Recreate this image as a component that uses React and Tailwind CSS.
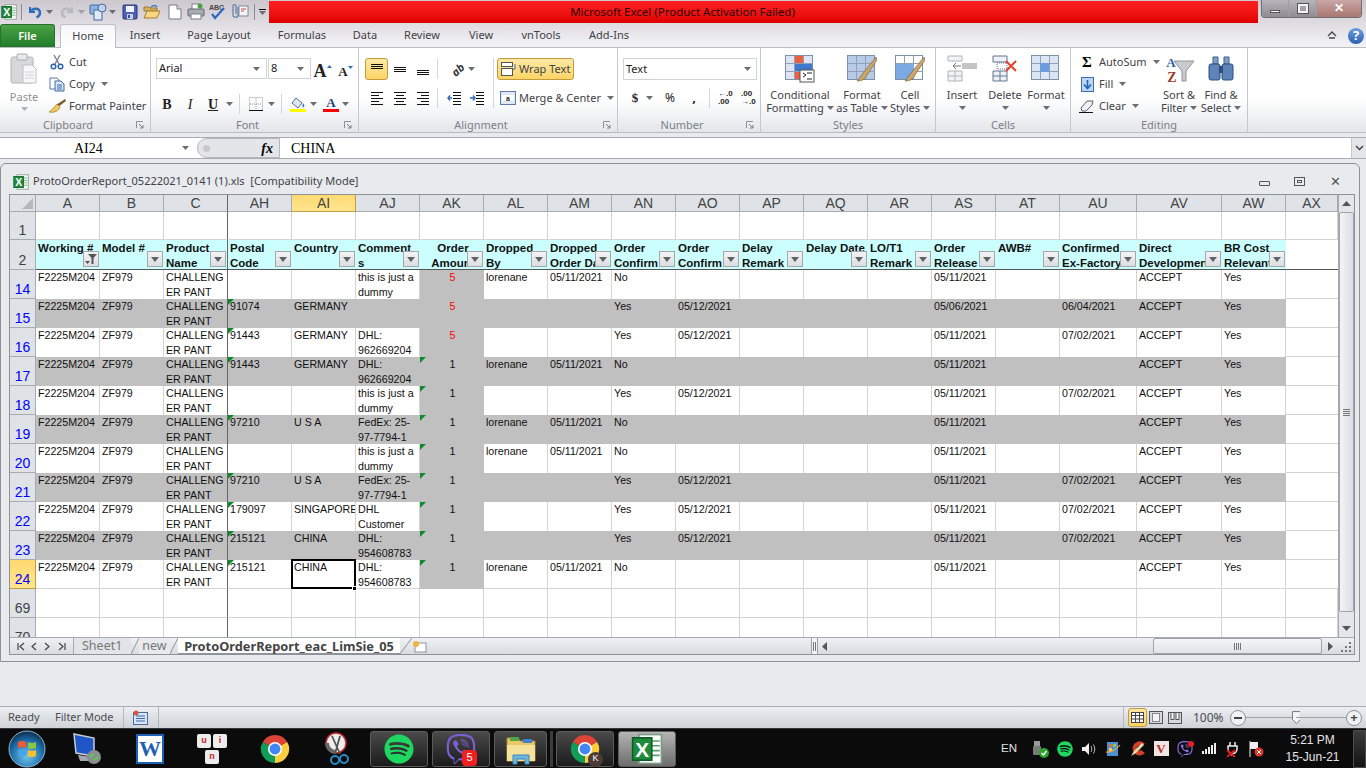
import React from "react";
import { FaSpotify, FaViber } from "react-icons/fa";

const GRID = "grid grid-cols-[26px_repeat(16,64px)_77px_85px_64px_52px]";

const columns = ["A", "B", "C", "AH", "AI", "AJ", "AK", "AL", "AM", "AN", "AO", "AP", "AQ", "AR", "AS", "AT", "AU", "AV", "AW", "AX"];

const headers = [
  ["Working #", ""], ["Model #", ""], ["Product", "Name"], ["Postal", "Code"], ["Country", ""], ["Comment", "s"],
  ["Order", "Amount"], ["Dropped", "By"], ["Dropped", "Order Date"], ["Order", "Confirm"], ["Order", "Confirm"],
  ["Delay", "Remark"], ["Delay Date", ""], ["LO/T1", "Remark"], ["Order", "Release"], ["AWB#", ""],
  ["Confirmed", "Ex-Factory"], ["Direct", "Development"], ["BR Cost", "Relevant"],
];

const dropped = { al: "lorenane", am: "05/11/2021", an: "No" };
const confirmed = { an: "Yes", ao: "05/12/2021" };
const dummy = ["this is just a", "dummy"];

const rows = [
  { n: 14, aj: dummy, ak: "5", ...dropped, as: "05/11/2021" },
  { n: 15, gray: true, ah: "91074", ai: "GERMANY", ak: "5", ...confirmed, as: "05/06/2021", au: "06/04/2021" },
  { n: 16, ah: "91443", ai: "GERMANY", aj: ["DHL:", "962669204"], ak: "5", ...confirmed, as: "05/11/2021", au: "07/02/2021" },
  { n: 17, gray: true, ah: "91443", ai: "GERMANY", aj: ["DHL:", "962669204"], ak: "1", ...dropped, as: "05/11/2021" },
  { n: 18, aj: dummy, ak: "1", ...confirmed, as: "05/11/2021", au: "07/02/2021" },
  { n: 19, gray: true, ah: "97210", ai: "U S A", aj: ["FedEx: 25-", "97-7794-1"], ak: "1", ...dropped, as: "05/11/2021" },
  { n: 20, aj: dummy, ak: "1", ...dropped, as: "05/11/2021" },
  { n: 21, gray: true, ah: "97210", ai: "U S A", aj: ["FedEx: 25-", "97-7794-1"], ak: "1", ...confirmed, as: "05/11/2021", au: "07/02/2021" },
  { n: 22, ah: "179097", ai: "SINGAPORE", aj: ["DHL", "Customer"], ak: "1", ...confirmed, as: "05/11/2021", au: "07/02/2021" },
  { n: 23, gray: true, ah: "215121", ai: "CHINA", aj: ["DHL:", "954608783"], ak: "1", ...confirmed, as: "05/11/2021", au: "07/02/2021" },
  { n: 24, ah: "215121", ai: "CHINA", aj: ["DHL:", "954608783"], ak: "1", ...dropped, as: "05/11/2021" },
];

function Caret({ className = "" }) {
  return (
    <svg width="7" height="4" viewBox="0 0 7 4" className={`shrink-0 ${className}`}>
      <polygon points="0,0 7,0 3.5,4" fill="#6a6e74" />
    </svg>
  );
}

function XlLogo({ size = 16 }) {
  return (
    <svg width={size} height={size} viewBox="0 0 20 20">
      <rect x="5" y="1" width="14" height="18" fill="#fff" stroke="#7b9b84" />
      <path d="M12 5h6M12 8h6M12 11h6M12 14h6" stroke="#58a36b" />
      <rect x="1" y="3" width="12" height="14" fill="#1e8a3c" stroke="#0c5e25" />
      <text x="7" y="15" fontSize="13" fontWeight="700" fill="#fff" textAnchor="middle" fontFamily="Liberation Sans">X</text>
    </svg>
  );
}

function Chrome({ size = 30 }) {
  return (
    <svg width={size} height={size} viewBox="0 0 32 32">
      <path d="M16 16L3 8.5A15 15 0 0 1 29 8.5Z" fill="#db4437" />
      <path d="M16 16L3 8.5A15 15 0 0 0 16 31Z" fill="#0f9d58" />
      <path d="M16 16L16 31A15 15 0 0 0 29 8.5Z" fill="#ffcd40" />
      <circle cx="16" cy="16" r="7.5" fill="#fff" />
      <circle cx="16" cy="16" r="5.8" fill="#4285f4" />
    </svg>
  );
}

function Scissors({ size = 16 }) {
  return (
    <svg width={size} height={size} viewBox="0 0 16 16" fill="none">
      <path d="M5 1l5 9M11 1L6 10" stroke="#7d8791" strokeWidth="1.5" />
      <circle cx="4.5" cy="12.5" r="2.3" stroke="#2f62ad" strokeWidth="1.5" />
      <circle cx="11.5" cy="12.5" r="2.3" stroke="#2f62ad" strokeWidth="1.5" />
    </svg>
  );
}

function QatIcon({ name }) {
  if (name === "undo") {
    return (
      <svg width="16" height="16" viewBox="0 0 16 16" fill="none">
        <path d="M3 3v5h5" stroke="#2f6cbc" strokeWidth="2" />
        <path d="M3.5 8C6 3 13 4 13 9c0 2-1.5 3.500-3.500 4.500" stroke="#2f6cbc" strokeWidth="2.4" />
      </svg>
    );
  }
  if (name === "redo") {
    return (
      <svg width="16" height="16" viewBox="0 0 16 16" fill="none">
        <path d="M13 3v5H8" stroke="#b6b9bd" strokeWidth="2" />
        <path d="M12.5 8C10 3 3 4 3 9c0 2 1.500 3.500 3.500 4.500" stroke="#b6b9bd" strokeWidth="2.4" />
      </svg>
    );
  }
  if (name === "shapes") {
    return (
      <svg width="18" height="18" viewBox="0 0 18 18">
        <rect x="1" y="2" width="9" height="9" rx="1" fill="#8db4e4" stroke="#44699c" />
        <rect x="5" y="7" width="8" height="10" fill="#dfeaf8" stroke="#44699c" />
        <circle cx="13" cy="5" r="4" fill="#bed4ef" stroke="#44699c" />
      </svg>
    );
  }
  if (name === "save") {
    return (
      <svg width="16" height="16" viewBox="0 0 16 16">
        <rect x="1" y="1" width="14" height="14" rx="1" fill="#4a63b8" stroke="#29386f" />
        <rect x="4" y="2" width="8" height="6" fill="#f1f4fb" />
        <rect x="5" y="10" width="6" height="5" fill="#c6cfe6" />
        <rect x="6" y="11" width="2" height="3" fill="#3a4d92" />
      </svg>
    );
  }
  if (name === "open") {
    return (
      <svg width="18" height="16" viewBox="0 0 18 16">
        <path d="M1 3h5l1 1h7v3H1z" fill="#d5b25f" stroke="#99742c" />
        <path d="M1 14l3-7h13l-3 7z" fill="#f6d680" stroke="#a67f30" />
        <path d="M8 3c2-2 5-2 6 0" fill="none" stroke="#3d78c1" strokeWidth="1.4" />
      </svg>
    );
  }
  if (name === "new") {
    return (
      <svg width="14" height="16" viewBox="0 0 14 16">
        <path d="M1 1h8l4 4v10H1z" fill="#fff" stroke="#6f7a88" />
        <path d="M9 1v4h4" fill="#dbe4ee" stroke="#6f7a88" />
      </svg>
    );
  }
  if (name === "print") {
    return (
      <svg width="18" height="17" viewBox="0 0 18 17">
        <rect x="5" y="1" width="8" height="6" fill="#fff" stroke="#7a7f87" />
        <rect x="1" y="6" width="16" height="7" rx="1" fill="#a9adb4" stroke="#5f646b" />
        <rect x="4" y="11" width="10" height="5" fill="#fff" stroke="#7a7f87" />
        <circle cx="13" cy="3" r="2.5" fill="#4aa246" />
      </svg>
    );
  }
  if (name === "spell") {
    return (
      <svg width="18" height="17" viewBox="0 0 18 17">
        <text x="0" y="7" fontSize="7" fontWeight="700" fill="#444" fontFamily="Liberation Sans">ABC</text>
        <path d="M3 11l3 4 9-10" fill="none" stroke="#2c69c2" strokeWidth="2.2" />
      </svg>
    );
  }
  return (
    <svg width="18" height="17" viewBox="0 0 18 17" fill="none">
      <rect x="8" y="3" width="9" height="10" fill="#f3f5f8" stroke="#7f8a99" />
      <path d="M10 6h5M10 8h3" stroke="#c5534a" />
      <path d="M7 4v8c0 3-5 3-5 0V3c0-2 3-2 3 0v8" stroke="#5a7ea8" strokeWidth="1.2" />
    </svg>
  );
}

function TitleBar() {
  return (
    <div className="flex h-[23px] items-center">
      <div className="ml-px flex w-[16px] justify-center"><XlLogo /></div>
      <div className="ml-[4px] h-[16px] w-px bg-[#8b8b90]" />
      <div className="ml-[5px] w-[16px]"><QatIcon name="undo" /></div>
      <Caret className="ml-[3px]" />
      <div className="ml-[6px] w-[16px]"><QatIcon name="redo" /></div>
      <Caret className="ml-[3px] opacity-50" />
      <div className="ml-[4px] w-[18px]"><QatIcon name="shapes" /></div>
      <Caret className="ml-[2px]" />
      <div className="ml-[6px] w-[16px]"><QatIcon name="save" /></div>
      <div className="ml-[5px] w-[18px]"><QatIcon name="open" /></div>
      <div className="ml-[7px] w-[14px]"><QatIcon name="new" /></div>
      <div className="ml-[5px] w-[18px]"><QatIcon name="print" /></div>
      <div className="ml-[4px] w-[18px]"><QatIcon name="spell" /></div>
      <div className="ml-[4px] w-[18px]"><QatIcon name="attach" /></div>
      <div className="ml-[5px] h-[16px] w-px bg-[#8b8b90]" />
      <div className="ml-[3px] flex w-[9px] flex-col items-center gap-[1px]">
        <div className="h-px w-[7px] bg-black" />
        <Caret />
      </div>
      <div className="ml-[2px] mt-[1px] flex h-[22px] w-[989px] items-center justify-center bg-gradient-to-b from-[#ff2020] to-[#df0000] pr-[162px] text-[11.5px] text-[#2b0a0a]">
        Microsoft Excel (Product Activation Failed)
      </div>
      <div className="mb-[6px] ml-[3px] flex h-[18px] w-[101px] overflow-hidden rounded-b-[4px] border border-t-0 border-[#6d6f75]">
        <div className="flex w-[27px] items-center justify-center border-r border-[#9d9ea3] bg-gradient-to-b from-[#b7b4ba] to-[#8e8c92]">
          <div className="mt-[6px] h-[3px] w-[10px] border border-[#555] bg-white" />
        </div>
        <div className="flex w-[28px] items-center justify-center border-r border-[#9d9ea3] bg-gradient-to-b from-[#b7b4ba] to-[#8e8c92]">
          <div className="h-[9px] w-[10px] border-2 border-[#f2f2f2] outline outline-1 outline-[#555]" />
        </div>
        <div className="flex flex-1 items-center justify-center bg-gradient-to-b from-[#c9a6a6] to-[#a97770] text-[12px] font-bold leading-none text-white">
          ✕
        </div>
      </div>
    </div>
  );
}

function Tabs() {
  const tabs = [
    ["Insert", "w-[58px]"], ["Page Layout", "w-[90px]"], ["Formulas", "w-[76px]"], ["Data", "w-[50px]"],
    ["Review", "w-[64px]"], ["View", "w-[54px]"], ["vnTools", "w-[66px]"], ["Add-Ins", "w-[70px]"],
  ];
  return (
    <div className="flex h-[24px] items-end text-[11px] text-[#3f4247]">
      <div className="flex h-[23px] w-[55px] items-center justify-center rounded-t-[3px] border border-b-0 border-[#2b6e2f] bg-gradient-to-b from-[#4aa345] to-[#1f7a2a] font-semibold text-white">
        File
      </div>
      <div className="z-10 -mb-px ml-[5px] flex h-[24px] w-[56px] items-center justify-center rounded-t-[3px] border border-b-0 border-[#bcbfc4] bg-gradient-to-b from-[#f7f7f9] to-white">
        Home
      </div>
      {tabs.map(([label, width]) => (
        <div key={label} className={`flex h-[23px] items-center justify-center ${width}`}>{label}</div>
      ))}
      <div className="flex-1" />
      <svg width="10" height="8" viewBox="0 0 10 8" className="mb-[8px] mr-[11px]" fill="none">
        <path d="M1 5l4-4 4 4M2 7h6" stroke="#45474c" strokeWidth="1.4" />
      </svg>
      <div className="mb-[3px] mr-[2px] flex h-[16px] w-[16px] items-center justify-center rounded-full bg-gradient-to-b from-[#6f9fdc] to-[#2561b1] text-[13px] font-bold text-white">
        ?
      </div>
    </div>
  );
}

function Launcher() {
  return (
    <svg width="8" height="8" viewBox="0 0 8 8" className="mr-[6px]" fill="none">
      <path d="M.5 7V.5H7" stroke="#8d9299" />
      <path d="M3 3l4 4M7 4v3H4" stroke="#7b8087" />
    </svg>
  );
}

function Group({ width, label, launcher = false, children }) {
  return (
    <div className={`flex h-[85px] flex-col border-r border-[#c4c7cc] ${width}`}>
      <div className="h-[70px]">{children}</div>
      <div className="-mt-px flex h-[15px] items-center text-[11px] leading-[15px] text-[#7a8087]">
        <div className="flex-1 text-center">{label}</div>
        {launcher && <Launcher />}
      </div>
    </div>
  );
}

function LargeButton({ width, icon, lines }) {
  return (
    <div className={`flex flex-col items-center pt-[6px] text-[11px] leading-[13px] text-[#3f4247] ${width}`}>
      <div className="flex h-[30px] items-center justify-center">{icon}</div>
      <div className="mt-[4px] whitespace-nowrap">{lines[0]}</div>
      <div className="flex h-[13px] items-center gap-[3px] whitespace-nowrap">
        {lines[1]}
        <Caret />
      </div>
    </div>
  );
}

function SmallRow({ icon, label, caret }) {
  return (
    <div className="flex h-[22px] items-center whitespace-nowrap text-[11px] text-[#3f4247]">
      <div className="flex w-[18px] shrink-0 justify-center">{icon}</div>
      <span className="ml-[3px]">{label}</span>
      {caret && <Caret className="ml-[6px]" />}
    </div>
  );
}

function VAlign({ pos }) {
  const y = { top: 2, mid: 5, bottom: 8 }[pos];
  return (
    <svg width="14" height="14" viewBox="0 0 14 14">
      <path d={`M1 ${y + .5}h12M1 ${y + 2.5}h12M1 ${y + 4.5}h12`} stroke="#111" />
    </svg>
  );
}

function HAlign({ pos }) {
  const short = { left: 1, center: 3, right: 5 }[pos];
  return (
    <svg width="14" height="14" viewBox="0 0 14 14">
      <path d={`M1 1.5h12M${short} 4.5h8M1 7.5h12M${short} 10.5h8M1 13.5h12`} stroke="#111" />
    </svg>
  );
}

function Indent({ flip }) {
  return (
    <svg width="15" height="14" viewBox="0 0 15 14">
      <path d="M6 1.5h8M6 4.5h8M6 7.5h8M6 10.5h8M6 13.5h8" stroke="#111" />
      <path d={flip ? "M0 7h4M3 4.5L5 7 3 9.5" : "M1 7h4M3 4.5L1 7l2 2.5"} fill="none" stroke="#2f6cbc" strokeWidth="1.4" />
    </svg>
  );
}

function GridIcon({ fill = "#dbe5f3", hl }) {
  return (
    <svg width="30" height="28" viewBox="0 0 30 28">
      <rect x=".5" y=".5" width="27" height="24" fill={fill} stroke="#7f8fa6" />
      <path d="M.5 8.5h27M.5 16.5h27M9.5.5v24M18.5.5v24" stroke="#8fa0b8" />
      {hl}
    </svg>
  );
}

function Brush() {
  return <path d="M29 2L16 18l-6 8c5 0 9-2 10-6L30 5z" fill="#c9a46b" stroke="#705a35" strokeWidth=".6" />;
}

function Ribbon() {
  return (
    <div className="flex h-[86px] border-y border-[#b8bbc0] bg-gradient-to-b from-white from-60% to-[#e3e6ea] text-[#3f4247]">
      <Group width="w-[151px]" label="Clipboard" launcher>
        <div className="flex pt-[3px]">
          <div className="flex w-[48px] flex-col items-center text-[11px] text-[#8d9095]">
            <svg width="28" height="32" viewBox="0 0 28 32" className="mt-[2px]">
              <rect x="1" y="4" width="22" height="26" rx="2" fill="#d7d8da" stroke="#b3b4b7" />
              <rect x="7" y="1" width="10" height="6" rx="1" fill="#e9e9ea" stroke="#a9aaad" />
              <path d="M13 12h9l4 4v14H13z" fill="#f7f7f7" stroke="#c0c1c4" />
              <path d="M15 19h9M15 22h9M15 25h9" stroke="#cfd0d3" />
            </svg>
            <div className="mt-[5px] leading-[13px]">Paste</div>
            <Caret className="mt-[4px] opacity-50" />
          </div>
          <div>
            <SmallRow icon={<Scissors />} label="Cut" />
            <SmallRow label="Copy" caret icon={(
              <svg width="16" height="15" viewBox="0 0 16 15">
                <path d="M1 1h7l2 2v9H1z" fill="#fff" stroke="#5679a8" />
                <path d="M6 4h6l3 3v7H6z" fill="#dbe7f6" stroke="#3e68a5" />
                <path d="M8 8h5M8 10h5M8 12h5" stroke="#3e68a5" />
              </svg>
            )} />
            <SmallRow label="Format Painter" icon={(
              <svg width="18" height="16" viewBox="0 0 18 16">
                <path d="M17 1l1 2-8 6-2-2z" fill="#7d5a2f" />
                <path d="M9 6l3 3c-1 4-6 6-11 5 3-2 5-5 8-8z" fill="#edc85e" stroke="#9b7b2c" strokeWidth=".7" />
              </svg>
            )} />
          </div>
        </div>
      </Group>
      <Group width="w-[208px]" label="Font" launcher>
        <div className="flex pl-[5px] pt-[10px] text-[11px] text-[#222]">
          <div className="flex h-[21px] w-[111px] items-center justify-between border border-[#d0d3d8] bg-white pl-[2px] pr-[6px]">
            Arial <Caret />
          </div>
          <div className="ml-px flex h-[21px] w-[43px] items-center justify-between border border-[#d0d3d8] bg-white pl-[2px] pr-[6px]">
            8 <Caret />
          </div>
          <div className="flex w-[23px] items-center justify-center font-['Liberation_Serif',serif] text-[18px] font-bold">
            A
            <svg width="5" height="3" viewBox="0 0 5 3" className="mb-[11px]"><polygon points="0,3 5,3 2.500,0" fill="#2f6cbc" /></svg>
          </div>
          <div className="flex w-[23px] items-center justify-center font-['Liberation_Serif',serif] text-[13px] font-bold">
            A
            <svg width="5" height="3" viewBox="0 0 5 3" className="mb-[9px]"><polygon points="0,0 5,0 2.500,3" fill="#2f6cbc" /></svg>
          </div>
        </div>
        <div className="mt-[8px] flex h-[22px] items-center pl-[5px]">
          <div className="w-[22px] text-center font-['Liberation_Serif',serif] text-[14px] font-bold text-[#222]">B</div>
          <div className="ml-px w-[22px] text-center font-['Liberation_Serif',serif] text-[14px] italic text-[#222]">I</div>
          <div className="ml-px w-[22px] text-center font-['Liberation_Serif',serif] text-[14px] font-bold text-[#222] underline">U</div>
          <Caret className="ml-[2px]" />
          <div className="ml-[6px] h-[20px] w-px bg-[#d4d6da]" />
          <svg width="14" height="14" viewBox="0 0 14 14" className="ml-[9px]">
            <rect x=".5" y=".5" width="13" height="13" fill="none" stroke="#999" strokeDasharray="1 1" />
            <path d="M7 1v12M1 7h12" stroke="#999" strokeDasharray="1 1" />
            <path d="M0 13.5h14" stroke="#111" />
          </svg>
          <Caret className="ml-[5px]" />
          <div className="ml-[6px] h-[20px] w-px bg-[#d4d6da]" />
          <svg width="16" height="15" viewBox="0 0 16 15" className="ml-[8px]">
            <path d="M6 1l6 5-4 5-6-5z" fill="#dfe6ef" stroke="#53719b" />
            <path d="M13 6c1 2 2 3 1 4s-2-1-1-4z" fill="#2f6cbc" />
            <rect x="0" y="12" width="16" height="3" fill="#ffff00" />
          </svg>
          <Caret className="ml-[4px]" />
          <div className="ml-[6px] flex w-[16px] flex-col items-center">
            <span className="font-['Liberation_Serif',serif] text-[13px] font-bold leading-[12px] text-[#1f3f7d]">A</span>
            <div className="h-[3px] w-[16px] bg-[#ff0000]" />
          </div>
          <Caret className="ml-[3px]" />
        </div>
      </Group>
      <Group width="w-[259px]" label="Alignment" launcher>
        <div className="flex">
          <div className="flex flex-col pl-[6px] pt-[10px]">
            <div className="flex h-[22px] items-center">
              <div className="flex h-[22px] w-[23px] items-center justify-center rounded-[3px] border border-[#c29b3f] bg-gradient-to-b from-[#fde9a4] to-[#fbd564]"><VAlign pos="top" /></div>
              <div className="flex w-[23px] justify-center"><VAlign pos="mid" /></div>
              <div className="flex w-[23px] justify-center"><VAlign pos="bottom" /></div>
              <div className="ml-[3px] h-[20px] w-px bg-[#d4d6da]" />
              <span className="ml-[13px] -rotate-45 text-[11px] font-bold italic leading-none text-[#333]">ab</span>
              <Caret className="ml-[4px]" />
            </div>
            <div className="mt-[7px] flex h-[22px] items-center">
              <div className="flex w-[23px] justify-center"><HAlign pos="left" /></div>
              <div className="flex w-[23px] justify-center"><HAlign pos="center" /></div>
              <div className="flex w-[23px] justify-center"><HAlign pos="right" /></div>
              <div className="ml-[3px] h-[20px] w-px bg-[#d4d6da]" />
              <div className="ml-[9px]"><Indent /></div>
              <div className="ml-[8px]"><Indent flip /></div>
            </div>
          </div>
          <div className="ml-[8px] mt-[10px] h-[50px] w-px bg-[#d4d6da]" />
          <div className="ml-[3px] flex flex-col whitespace-nowrap pt-[10px] text-[11px]">
            <div className="flex h-[22px] w-[77px] items-center rounded-[3px] border border-[#c29b3f] bg-gradient-to-b from-[#fde9a4] to-[#fbd564] pl-[3px]">
              <svg width="16" height="14" viewBox="0 0 16 14" fill="none">
                <rect x=".5" y=".5" width="11" height="4" fill="#fff" stroke="#555" />
                <rect x=".5" y="6.5" width="11" height="7" fill="#fff" stroke="#555" />
                <path d="M14 2v5h-2" stroke="#2f6cbc" />
              </svg>
              <span className="ml-[2px]">Wrap Text</span>
            </div>
            <div className="mt-[7px] flex h-[22px] items-center pl-[3px]">
              <svg width="16" height="14" viewBox="0 0 16 14">
                <rect x=".5" y=".5" width="15" height="13" fill="#dfe8f4" stroke="#5c7ca6" />
                <rect x="2" y="4" width="12" height="6" fill="#fff" />
                <text x="8" y="9.500" fontSize="7" fontWeight="700" textAnchor="middle" fill="#222" fontFamily="Liberation Sans">a</text>
              </svg>
              <span className="ml-[3px]">Merge &amp; Center</span>
              <Caret className="ml-[6px]" />
            </div>
          </div>
        </div>
      </Group>
      <Group width="w-[143px]" label="Number" launcher>
        <div className="pl-[5px] pt-[10px]">
          <div className="flex h-[22px] w-[134px] items-center justify-between border border-[#d0d3d8] bg-white pl-[2px] pr-[5px] text-[11px] text-[#222]">
            Text <Caret />
          </div>
          <div className="mt-[7px] flex h-[22px] items-center text-[13px] font-bold text-[#222]">
            <span className="ml-[7px] w-[10px] text-center font-['Liberation_Serif',serif]">$</span>
            <Caret className="ml-[6px]" />
            <span className="ml-[9px] w-[16px] text-center text-[12px] font-normal">%</span>
            <span className="ml-[13px] w-[6px] text-center">,</span>
            <div className="ml-[12px] h-[20px] w-px bg-[#d4d6da]" />
            <div className="ml-[8px] w-[18px] whitespace-nowrap font-['Liberation_Sans',sans-serif] text-[8px] leading-[8px]">←.0<br />.00</div>
            <div className="ml-[5px] w-[18px] whitespace-nowrap font-['Liberation_Sans',sans-serif] text-[8px] leading-[8px]">.00<br />→.0</div>
          </div>
        </div>
      </Group>
      <Group width="w-[175px]" label="Styles">
        <div className="flex pl-[4px]">
          <LargeButton width="w-[70px]" lines={["Conditional", "Formatting"]} icon={(
            <GridIcon hl={(
              <>
                <rect x="10" y="1" width="8" height="7" fill="#ee5e3d" />
                <rect x="10" y="9" width="17" height="7" fill="#3f78cd" />
                <rect x="10" y="17" width="8" height="7" fill="#ee5e3d" />
                <rect x="15" y="15" width="14" height="12" fill="#fff" stroke="#555" />
                <path d="M18 18l3 2-3 2M22 24h5M22 18h5" stroke="#222" fill="none" />
              </>
            )} />
          )} />
          <LargeButton width="w-[54px]" lines={["Format", "as Table"]} icon={(
            <GridIcon fill="#b8cbe6" hl={<Brush />} />
          )} />
          <LargeButton width="w-[42px]" lines={["Cell", "Styles"]} icon={(
            <GridIcon fill="#fff" hl={(
              <>
                <rect x="1" y="9" width="18" height="15" fill="#7ca8e3" />
                <Brush />
              </>
            )} />
          )} />
        </div>
      </Group>
      <Group width="w-[135px]" label="Cells">
        <div className="flex pl-[4px]">
          <LargeButton width="w-[44px]" lines={["Insert", ""]} icon={(
            <svg width="30" height="28" viewBox="0 0 30 28">
              <path d="M1 1h14v5H1zM1 16h14v10H1zM1 21h14M8 16v10" fill="#f2f3f4" stroke="#b3b4b7" />
              <rect x="15" y="8" width="15" height="6" fill="#c3c4c6" />
              <path d="M14 11H6M9 8l-3 3 3 3" fill="none" stroke="#777" />
            </svg>
          )} />
          <LargeButton width="w-[42px]" lines={["Delete", ""]} icon={(
            <svg width="26" height="28" viewBox="0 0 26 28">
              <path d="M1 1h14v6H1zM1 16h14v10H1zM1 21h14M8 16v10" fill="#eef2f7" stroke="#63748b" />
              <rect x="5" y="8" width="10" height="6" fill="#fff" stroke="#5373a5" strokeDasharray="1 1" />
              <path d="M14 6l10 10M24 6L14 16" stroke="#e83f2a" strokeWidth="2" />
            </svg>
          )} />
          <LargeButton width="w-[40px]" lines={["Format", ""]} icon={(
            <GridIcon hl={<rect x="9" y="8" width="9" height="9" fill="#6d9be0" />} />
          )} />
        </div>
      </Group>
      <Group width="w-[177px]" label="Editing">
        <div className="flex">
          <div className="w-[85px] pl-[7px] pt-[3px]">
            <SmallRow label="AutoSum" caret icon={<span className="font-['Liberation_Serif',serif] text-[15px] font-bold text-black">Σ</span>} />
            <SmallRow label="Fill" caret icon={(
              <svg width="13" height="15" viewBox="0 0 13 15">
                <rect x=".5" y=".5" width="12" height="14" fill="#bcd5f3" stroke="#3d6fb3" />
                <path d="M6.500 3v8M3 7.500l3.500 4 3.500-4" fill="none" stroke="#2364b7" strokeWidth="1.6" />
              </svg>
            )} />
            <SmallRow label="Clear" caret icon={(
              <svg width="16" height="13" viewBox="0 0 16 13">
                <path d="M2 8l6-7h6l-1 4-6 6H3z" fill="#eef0f3" stroke="#58616d" />
                <path d="M0 12.500h14" stroke="#111" />
              </svg>
            )} />
          </div>
          <LargeButton width="w-[46px]" lines={["Sort &", "Filter"]} icon={(
            <svg width="31" height="28" viewBox="0 0 31 28">
              <path d="M10 6h20l-8 10v10h-4V16z" fill="#c8cbcf" stroke="#8f9398" />
              <text x="7" y="12" fontSize="13" fontWeight="700" textAnchor="middle" fill="#2e5fae" fontFamily="Liberation Serif">A</text>
              <text x="8" y="27" fontSize="14" fontWeight="700" textAnchor="middle" fill="#9a3b2f" fontFamily="Liberation Serif">Z</text>
            </svg>
          )} />
          <LargeButton width="w-[38px]" lines={["Find &", "Select"]} icon={(
            <svg width="28" height="26" viewBox="0 0 28 26">
              <path d="M6 1h5v7H6zM17 1h5v7h-5z" fill="#7f9fca" stroke="#3e5f8e" />
              <rect x="2" y="8" width="11" height="16" rx="2" fill="#5e83b8" stroke="#2f4e7d" />
              <rect x="15" y="8" width="11" height="16" rx="2" fill="#5e83b8" stroke="#2f4e7d" />
              <rect x="12" y="10" width="4" height="7" fill="#2f4e7d" />
            </svg>
          )} />
        </div>
      </Group>
    </div>
  );
}

function FormulaBar() {
  return (
    <div className="mt-[4px] flex h-[22px] items-center border-y border-[#a9adb3] bg-white font-['Liberation_Serif',serif] text-[14px] text-black">
      <div className="w-[182px] pl-[74px]">AI24</div>
      <Caret className="fill-black" />
      <div className="ml-[8px] flex h-[20px] w-[83px] items-center justify-between rounded-l-full border border-[#b5b8bd] bg-[#e3e5e9] pl-[5px] pr-[6px]">
        <div className="h-[7px] w-[7px] rounded-full bg-[#c6c8cc]" />
        <span className="font-bold italic">fx</span>
      </div>
      <div className="flex-1 pl-[11px]">CHINA</div>
      <div className="flex h-[20px] w-[15px] items-center justify-center border-l border-[#c4c7cc] bg-[#e3e5e9]">
        <svg width="9" height="6" viewBox="0 0 9 6" fill="none"><path d="M1 1l3.500 3.500L8 1" stroke="#444" strokeWidth="1.5" /></svg>
      </div>
    </div>
  );
}

function FilterButton({ active }) {
  return (
    <div className="absolute bottom-[2px] right-px flex h-[16px] w-[16px] items-center justify-center border border-[#a5a8ad] bg-gradient-to-b from-[#f4f4f5] to-[#dcdde0]">
      {active ? (
        <svg width="12" height="12" viewBox="0 0 12 12">
          <path d="M3 1h9L8.500 5v6h-2V5z" fill="#555" />
          <path d="M0 8h5L2.500 11z" fill="#555" />
        </svg>
      ) : (
        <svg width="8" height="5" viewBox="0 0 8 5"><polygon points="0,0 8,0 4,5" fill="#5f6368" /></svg>
      )}
    </div>
  );
}

function RowHeader({ n, height, active, blue }) {
  const tone = active
    ? "border-[#c29b3f] bg-gradient-to-b from-[#ffd970] to-[#ffe58f]"
    : "border-[#a6aab1] bg-[#dfe3e8]";
  const color = blue ? "text-[#0000ff]" : "text-[#3e4247]";
  return (
    <div className={`flex items-end justify-center border-b border-r pb-px text-[14px] leading-[16px] ${height} ${tone} ${color}`}>
      {n}
    </div>
  );
}

function DataCell({ value, gray, center, red, triangle, frozen, last }) {
  const lines = Array.isArray(value) ? value : [value];
  const fill = gray ? "border-[#c0c0c0] bg-[#c0c0c0]" : "border-[#d4d4d4] bg-white";
  return (
    <div className={`relative h-[29px] overflow-hidden whitespace-nowrap pl-[2px] leading-[14.5px] ${last ? "border-b" : ""} ${frozen ? "border-r border-r-[#666]" : "border-r"} ${fill} ${center ? "text-center" : ""} ${red ? "text-[#ff0000]" : "text-[#111]"}`}>
      {triangle && <div className="absolute left-0 top-0 border-r-[6px] border-t-[6px] border-r-transparent border-t-[#0d8a2b]" />}
      {lines.map((line) => <div key={line}>{line}</div>)}
    </div>
  );
}

function Sheet() {
  return (
    <div className="h-[442px] w-[1328px] overflow-hidden font-['Liberation_Sans',sans-serif] text-[10.67px]">
      <div className={`${GRID} h-[17px] text-center text-[14px] leading-[16px] text-[#444]`}>
        <div className="flex items-end justify-end border-b border-r border-[#a6aab1] bg-[#dfe3e8] p-[2px]">
          <div className="border-b-[11px] border-l-[11px] border-b-[#b4b8bd] border-l-transparent" />
        </div>
        {columns.map((col) => (
          <div
            key={col}
            className={col === "AI"
              ? "border-b border-r border-[#c29b3f] bg-gradient-to-b from-[#ffd970] to-[#ffe58f]"
              : `border-b bg-[#dfe3e8] ${col === "C" ? "border-r border-r-[#666] border-b-[#a6aab1]" : "border-r border-[#a6aab1]"}`}
          >
            {col}
          </div>
        ))}
      </div>
      <div className={GRID}>
        <RowHeader n="1" height="h-[28px]" />
        {columns.map((col) => (
          <div key={col} className={`h-[28px] border-b border-r border-[#d4d4d4] bg-white ${col === "C" ? "border-r-[#666]" : ""}`} />
        ))}
      </div>
      <div className={GRID}>
        <RowHeader n="2" height="h-[30px]" />
        {headers.map(([first, second], i) => (
          <div
            key={columns[i]}
            className={`relative h-[30px] overflow-hidden whitespace-nowrap border-b border-b-[#555] bg-[#ccffff] pl-[2px] pt-px text-[11.5px] font-bold leading-[14.5px] text-[#111] ${columns[i] === "C" ? "border-r border-r-[#666]" : ""} ${columns[i] === "AK" ? "text-center" : ""}`}
          >
            <div>{first}</div>
            <div>{second}</div>
            <FilterButton active={i === 0} />
          </div>
        ))}
        <div className="h-[30px] border-b border-b-[#555] bg-white" />
      </div>
      {rows.map((row) => {
        const last = row.n === 24;
        const cell = { gray: row.gray, last };
        return (
          <div key={row.n} className={GRID}>
            <RowHeader n={row.n} height="h-[29px]" blue active={last} />
            <DataCell value="F2225M204" {...cell} />
            <DataCell value="ZF979" {...cell} />
            <DataCell value={["CHALLENG", "ER PANT"]} {...cell} frozen />
            <DataCell value={row.ah} {...cell} triangle={!!row.ah} />
            {last ? (
              <div className="relative h-[29px] whitespace-nowrap border-r border-[#d4d4d4] bg-white pl-[2px] leading-[14.5px] text-[#111]">
                {row.ai}
                <div className="absolute -left-px -top-px z-10 h-[30px] w-[65px] border-2 border-black" />
                <div className="absolute -bottom-[2px] -right-[2px] z-20 h-[5px] w-[5px] border border-white bg-black" />
              </div>
            ) : (
              <DataCell value={row.ai} {...cell} />
            )}
            <DataCell value={row.aj} {...cell} />
            <DataCell value={row.ak} gray center red={row.ak === "5"} triangle={row.n >= 17} />
            <DataCell value={row.al} {...cell} />
            <DataCell value={row.am} {...cell} />
            <DataCell value={row.an} {...cell} />
            <DataCell value={row.ao} {...cell} />
            <DataCell {...cell} />
            <DataCell {...cell} />
            <DataCell {...cell} />
            <DataCell value={row.as} {...cell} />
            <DataCell {...cell} />
            <DataCell value={row.au} {...cell} />
            <DataCell value="ACCEPT" {...cell} />
            <DataCell value="Yes" {...cell} />
            <div className="h-[29px] border-b border-[#d4d4d4] bg-white" />
          </div>
        );
      })}
      {["69", "70"].map((n) => (
        <div key={n} className={GRID}>
          <RowHeader n={n} height="h-[29px]" />
          {columns.map((col) => (
            <div key={col} className={`h-[29px] border-b border-r border-[#d4d4d4] bg-white ${col === "C" ? "border-r-[#666]" : ""}`} />
          ))}
        </div>
      ))}
    </div>
  );
}

function VScroll() {
  return (
    <div className="flex h-[442px] w-[16px] flex-col items-center border-l border-[#a6aab1] bg-[#e3e6ea]">
      <div className="flex h-[17px] items-center">
        <svg width="9" height="5" viewBox="0 0 9 5"><polygon points="0,5 9,5 4.500,0" fill="#555" /></svg>
      </div>
      <div className="flex h-[400px] w-[15px] items-center justify-center rounded-[2px] border border-[#9ea3a9] bg-gradient-to-r from-[#f4f5f7] to-[#d9dce1]">
        <div className="flex flex-col gap-px">
          <div className="h-px w-[7px] bg-[#777]" />
          <div className="h-px w-[7px] bg-[#777]" />
          <div className="h-px w-[7px] bg-[#777]" />
          <div className="h-px w-[7px] bg-[#777]" />
        </div>
      </div>
      <div className="flex-1" />
      <div className="flex h-[17px] items-center">
        <svg width="9" height="5" viewBox="0 0 9 5"><polygon points="0,0 9,0 4.500,5" fill="#555" /></svg>
      </div>
    </div>
  );
}

function Slant({ width = 8 }) {
  return (
    <svg width={width} height="16" viewBox={`0 0 ${width} 16`} className="shrink-0">
      <path d={`M0 16L${width} 0`} stroke="#8f949a" fill="none" />
    </svg>
  );
}

function SheetTabs() {
  const nav = ["M1 1v7M7 1L3 4.500 7 8", "M6 1L2 4.500 6 8", "M2 1l4 3.500L2 8", "M8 1v7M2 1l4 3.500L2 8"];
  return (
    <div className="flex h-[17px] border-t border-[#a6aab1] bg-gradient-to-b from-[#eff1f4] to-[#d8dbe0] text-[12.5px] leading-[16px] text-[#777]">
      <div className="flex w-[63px] items-center justify-around px-[5px]">
        {nav.map((d) => (
          <svg key={d} width="9" height="9" viewBox="0 0 9 9" fill="none"><path d={d} stroke="#444" strokeWidth="1.2" /></svg>
        ))}
      </div>
      <div className="flex w-[58px] items-center justify-center border-l border-[#a6aab1] bg-[#e1e4e8]">Sheet1</div>
      <Slant />
      <div className="flex w-[32px] items-center justify-center bg-[#e8eaed]">new</div>
      <Slant />
      <div className="flex w-[222px] items-center justify-center whitespace-nowrap border-b border-[#8f949a] bg-white text-[12.8px] font-bold text-[#444]">
        ProtoOrderReport_eac_LimSie_05
      </div>
      <Slant width={12} />
      <div className="flex w-[33px] items-center justify-start">
        <svg width="15" height="13" viewBox="0 0 15 13">
          <rect x="3" y="3" width="11" height="9" fill="#fff" stroke="#8f949a" />
          <circle cx="4" cy="4" r="3" fill="#f1b13c" />
        </svg>
      </div>
      <div className="w-[368px]" />
      <div className="flex w-[7px] items-center justify-center border-x border-[#9ea3a9] bg-[#f2f3f5]">
        <div className="h-[9px] w-[3px] border-x border-[#777]" />
      </div>
      <div className="flex w-[12px] items-center justify-center">
        <svg width="5" height="9" viewBox="0 0 5 9"><polygon points="5,0 5,9 0,4.500" fill="#555" /></svg>
      </div>
      <div className="w-[324px]" />
      <div className="flex w-[170px] items-center justify-center rounded-[2px] border border-[#9ea3a9] bg-gradient-to-b from-[#f4f5f7] to-[#e1e4e8]">
        <div className="flex gap-px">
          <div className="h-[7px] w-px bg-[#777]" />
          <div className="h-[7px] w-px bg-[#777]" />
          <div className="h-[7px] w-px bg-[#777]" />
          <div className="h-[7px] w-px bg-[#777]" />
        </div>
      </div>
      <div className="flex w-[17px] items-center justify-center">
        <svg width="5" height="9" viewBox="0 0 5 9"><polygon points="0,0 0,9 5,4.500" fill="#555" /></svg>
      </div>
      <div className="flex flex-1 items-end justify-end p-[2px]">
        <svg width="11" height="11" viewBox="0 0 11 11" fill="#777">
          <rect x="8" y="1" width="2" height="2" /><rect x="8" y="5" width="2" height="2" /><rect x="8" y="9" width="2" height="2" />
          <rect x="4" y="5" width="2" height="2" /><rect x="4" y="9" width="2" height="2" /><rect x="0" y="9" width="2" height="2" />
        </svg>
      </div>
    </div>
  );
}

function Workbook() {
  return (
    <div className="mt-[4px] h-[499px] w-[1360px] rounded-t-[6px] border border-[#8d9299] bg-[#e8eaee]">
      <div className="flex h-[30px] items-center pl-[12px] pt-[5px] text-[11px] text-[#3f4247]">
        <XlLogo />
        <span className="ml-[4px] flex-1">ProtoOrderReport_05222021_0141 (1).xls&nbsp; [Compatibility Mode]</span>
        <div className="mt-[3px] h-[5px] w-[11px] rounded-[1px] border border-[#555]" />
        <div className="ml-[24px] flex h-[9px] w-[11px] items-center justify-center border border-[#555]">
          <div className="h-[3px] w-[5px] border border-[#555]" />
        </div>
        <span className="ml-[24px] mr-[18px] w-[12px] text-center text-[13px] leading-none text-[#555]">✕</span>
      </div>
      <div className="ml-[8px] w-[1346px] border border-[#8d9299]">
        <div className="flex">
          <Sheet />
          <VScroll />
        </div>
        <SheetTabs />
      </div>
    </div>
  );
}

function StatusBar() {
  return (
    <div className="mt-[44px] flex h-[22px] items-center border-t border-[#a9adb3] bg-gradient-to-b from-[#eceef1] to-[#cfd2d7] text-[11px] text-[#4a4d52]">
      <span className="ml-[8px] w-[47px]">Ready</span>
      <span className="w-[68px]">Filter Mode</span>
      <div className="h-[21px] w-px bg-[#b4b7bc]" />
      <svg width="15" height="15" viewBox="0 0 15 15" className="ml-[9px]">
        <rect x=".5" y="2.500" width="14" height="12" fill="#d8e5f6" stroke="#4a6da0" />
        <path d="M3 6h9M3 8.500h9M3 11h9" stroke="#3c67a8" />
        <circle cx="3" cy="3" r="2.500" fill="#d6573d" />
      </svg>
      <div className="ml-[10px] h-[21px] w-px bg-[#b4b7bc]" />
      <div className="flex-1" />
      <div className="h-[21px] w-px bg-[#b4b7bc]" />
      <div className="ml-[4px] flex h-[19px] w-[19px] items-center justify-center rounded-[3px] border border-[#c29b3f] bg-gradient-to-b from-[#fde9a4] to-[#fbd564]">
        <svg width="13" height="11" viewBox="0 0 13 11" fill="#fff">
          <rect x=".5" y=".5" width="12" height="10" stroke="#444" />
          <path d="M4.500 0v11M8.500 0v11M0 3.500h13M0 7h13" stroke="#444" />
        </svg>
      </div>
      <svg width="14" height="13" viewBox="0 0 14 13" className="ml-[2px]">
        <rect x=".5" y=".5" width="13" height="12" fill="#d7d9dd" stroke="#555" />
        <rect x="3.500" y="2.500" width="7" height="8" fill="#f4f4f5" stroke="#888" />
      </svg>
      <svg width="14" height="12" viewBox="0 0 14 12" className="ml-[5px]">
        <rect x=".5" y=".5" width="13" height="11" fill="#d7d9dd" stroke="#555" />
        <rect x="3" y=".5" width="3" height="7" fill="#fff" stroke="#555" />
        <rect x="8" y=".5" width="3" height="7" fill="#fff" stroke="#555" />
      </svg>
      <span className="ml-[11px] w-[30px] text-[12px]">100%</span>
      <div className="ml-[7px] flex h-[16px] w-[16px] items-center justify-center rounded-full border border-[#8d9299] bg-[#f0f1f3]">
        <div className="h-[2px] w-[8px] bg-[#444]" />
      </div>
      <div className="flex w-[100px] items-center">
        <div className="h-px w-[50px] bg-[#9ea3a9]" />
        <svg width="9" height="13" viewBox="0 0 9 13" className="-mx-[4px]">
          <path d="M.5.5h8v8l-4 4-4-4z" fill="#f4f5f6" stroke="#777" />
        </svg>
        <div className="h-px w-[50px] bg-[#9ea3a9]" />
      </div>
      <div className="mr-[4px] flex h-[16px] w-[16px] items-center justify-center rounded-full border border-[#8d9299] bg-[#f0f1f3] text-[13px] font-bold leading-none text-[#444]">
        +
      </div>
    </div>
  );
}

function TaskButton({ width, active, children }) {
  return (
    <div className={`flex h-[36px] items-center justify-center rounded-[3px] border border-[#5b5b5b] ${width} ${active ? "bg-gradient-to-b from-[#b5b5b5] to-[#6d6d6d]" : "bg-gradient-to-b from-[#4a4a4a] to-[#1c1c1c]"}`}>
      {children}
    </div>
  );
}

function Taskbar() {
  return (
    <div className="flex h-[40px] items-center border-t border-[#33363a] bg-[#0b0b0c] font-['Liberation_Sans',sans-serif]">
      <div className="flex w-[54px] justify-center">
        <svg width="38" height="38" viewBox="0 0 38 38">
          <defs>
            <radialGradient id="orb" cx="50%" cy="70%" r="65%">
              <stop offset="0%" stopColor="#6fc6ee" />
              <stop offset="70%" stopColor="#1c6aa6" />
              <stop offset="100%" stopColor="#0e3658" />
            </radialGradient>
          </defs>
          <circle cx="19" cy="19" r="18" fill="url(#orb)" stroke="#8fb6cf" />
          <path d="M10 12q4-2 8 0v6q-4-2-8 0z" fill="#f05a35" />
          <path d="M20 12q4 2 8 0v6q-4 2-8 0z" fill="#8cc63f" />
          <path d="M10 20q4-2 8 0v6q-4-2-8 0z" fill="#45a5e6" />
          <path d="M20 20q4 2 8 0v6q-4 2-8 0z" fill="#fbc02d" />
        </svg>
      </div>
      <div className="flex w-[66px] justify-center">
        <svg width="30" height="34" viewBox="0 0 30 34">
          <path d="M2 2l20 4v18L4 21z" fill="#1f55c8" stroke="#c9ccd1" strokeWidth="1.5" />
          <path d="M6 23l14 2v4H8z" fill="#a3a6ab" />
          <circle cx="22" cy="25" r="7" fill="#8a8d92" />
          <path d="M18 25l4-3M22 28l4-3" stroke="#4ade3b" strokeWidth="1.6" />
        </svg>
      </div>
      <div className="flex w-[60px] justify-center">
        <div className="flex h-[30px] w-[28px] items-center justify-center border-2 border-[#1f5fb4] bg-white font-['Liberation_Serif',serif] text-[22px] font-bold text-[#1f5fb4]">
          W
        </div>
      </div>
      <div className="flex w-[64px] flex-col items-center text-[9px] font-bold leading-[13px] text-[#c8242b]">
        <div className="flex gap-[2px]">
          <span className="h-[14px] w-[14px] rounded-[2px] bg-[#ececec] text-center">u</span>
          <span className="h-[14px] w-[14px] rounded-[2px] bg-[#ececec] text-center">i</span>
        </div>
        <span className="mt-[2px] h-[14px] w-[14px] rounded-[2px] bg-[#ececec] text-center">n</span>
      </div>
      <div className="flex w-[62px] justify-center"><Chrome /></div>
      <div className="flex w-[60px] justify-center">
        <svg width="30" height="36" viewBox="0 0 30 36" fill="none">
          <circle cx="15" cy="12" r="10" fill="#eee" stroke="#c22b2b" strokeWidth="1.5" />
          <path d="M6 12a9 9 0 0 0 9 9" stroke="#666" strokeWidth="4" />
          <path d="M11 5l8 18M19 5l-5 18" stroke="#555" strokeWidth="1.8" />
          <circle cx="14" cy="29" r="4" stroke="#2b8ac6" strokeWidth="2" />
          <circle cx="23" cy="28" r="4" stroke="#2b8ac6" strokeWidth="2" />
        </svg>
      </div>
      <TaskButton width="ml-[4px] w-[58px]"><FaSpotify size={30} color="#1ed760" /></TaskButton>
      <TaskButton width="ml-[4px] w-[58px]">
        <div className="relative flex h-[32px] w-[32px] items-center justify-center">
          <FaViber size={30} color="#7a5fd6" />
          <div className="absolute -bottom-[1px] right-0 flex h-[16px] w-[15px] items-center justify-center rounded-[4px] bg-[#f02020] text-[11px] leading-none text-white">5</div>
        </div>
      </TaskButton>
      <TaskButton width="ml-[4px] w-[53px]">
        <svg width="32" height="32" viewBox="0 0 32 32">
          <path d="M2 5h11l2 3h15v20H2z" fill="#e8c768" stroke="#a88934" />
          <rect x="5" y="4" width="9" height="4" fill="#4da845" />
          <rect x="18" y="6" width="9" height="4" fill="#3f7fd0" />
          <path d="M2 12h28v16H2z" fill="#f6e19c" />
          <path d="M8 31v-9h16v9h-4v-5h-8v5z" fill="#6bb6e0" stroke="#3d88b8" />
        </svg>
      </TaskButton>
      <div className="ml-[3px] h-[36px] w-[3px] rounded-[1px] bg-[#3c3c3c]" />
      <TaskButton width="ml-[3px] w-[58px]">
        <div className="relative">
          <Chrome />
          <div className="absolute -bottom-[3px] -right-[3px] flex h-[15px] w-[15px] items-center justify-center rounded-full bg-[#4d3b35] text-[9px] text-white">K</div>
        </div>
      </TaskButton>
      <TaskButton width="ml-[4px] w-[58px]" active><XlLogo size={32} /></TaskButton>
      <div className="flex-1" />
      <div className="flex items-center">
        <span className="w-[26px] text-center text-[11.5px] text-[#e2e2e2]">EN</span>
        <div className="ml-[6px] flex w-[24px] justify-center">
          <svg width="18" height="18" viewBox="0 0 18 18">
            <rect x="3" y="1" width="6" height="6" fill="#9a9a9a" />
            <rect x="2" y="6" width="8" height="9" rx="1" fill="#7a7a7a" />
            <circle cx="13" cy="13" r="5" fill="#2aa52a" />
            <path d="M10.500 13l2 2 3-4" fill="none" stroke="#fff" strokeWidth="1.4" />
          </svg>
        </div>
        <div className="flex w-[25px] justify-center"><FaSpotify size={16} color="#1ed760" /></div>
        <div className="flex w-[24px] justify-center">
          <svg width="16" height="16" viewBox="0 0 16 16" fill="none">
            <path d="M1 6h3l4-4v12l-4-4H1z" fill="#eee" />
            <path d="M10 5c1 2 1 4 0 6M12.500 3.500c1.700 3 1.700 6 0 9" stroke="#bbb" />
          </svg>
        </div>
        <div className="flex w-[24px] justify-center">
          <svg width="16" height="16" viewBox="0 0 16 16">
            <rect x="2" y="1" width="11" height="14" fill="#4a90d6" />
            <rect x="4" y="3" width="3" height="3" fill="#ef6c3a" />
            <rect x="8" y="3" width="3" height="3" fill="#8cc63f" />
            <rect x="4" y="7" width="3" height="3" fill="#fbd23f" />
            <path d="M1 11c4 1 11-3 14-7" stroke="#f0a23a" fill="none" strokeWidth="1.2" />
          </svg>
        </div>
        <div className="flex w-[24px] justify-center">
          <svg width="17" height="16" viewBox="0 0 17 16">
            <path d="M8 1a7 7 0 1 0 8 11l-4-3a2.500 2.500 0 1 1 0-4l4-2a7 7 0 0 0-8-2z" fill="#d2402b" />
            <path d="M13 2L5 10l-3 5 5-3 8-8z" fill="#e8d9a8" />
          </svg>
        </div>
        <div className="flex w-[24px] justify-center">
          <div className="flex h-[15px] w-[15px] items-center justify-center bg-[#f0e5e5] font-['Liberation_Serif',serif] text-[13px] font-bold leading-none text-[#b92a2a]">V</div>
        </div>
        <div className="relative flex w-[24px] justify-center">
          <FaViber size={16} color="#8a74e8" />
          <div className="absolute right-[3px] top-0 h-[6px] w-[6px] rounded-full bg-[#ee1c25]" />
        </div>
        <div className="flex w-[24px] justify-center">
          <svg width="15" height="11" viewBox="0 0 15 11" fill="#eee">
            <rect x="0" y="8" width="2" height="3" /><rect x="3" y="6" width="2" height="5" /><rect x="6" y="4" width="2" height="7" />
            <rect x="9" y="2" width="2" height="9" /><rect x="12" y="0" width="2" height="11" />
          </svg>
        </div>
        <div className="flex w-[24px] justify-center">
          <svg width="14" height="16" viewBox="0 0 14 16" fill="none">
            <path d="M4 1v4M9 1v4M2 5h9v3a4 4 0 0 1-9 0zM6 12v3" stroke="#eee" strokeWidth="1.5" />
            <path d="M1 9l8 7M9 9l-8 7" stroke="#e01b1b" strokeWidth="2" />
          </svg>
        </div>
        <div className="flex w-[23px] justify-center">
          <svg width="15" height="16" viewBox="0 0 15 16">
            <path d="M1 0v16" stroke="#eee" />
            <path d="M1 1h8v7H1z" fill="#eee" />
            <circle cx="10" cy="11" r="4.500" fill="#e0342c" />
            <path d="M8 9l4 4M12 9l-4 4" stroke="#fff" />
          </svg>
        </div>
        <div className="ml-[4px] flex w-[81px] flex-col items-center text-[12px] leading-[17px] text-[#e6e6e6]">
          <span>5:21 PM</span>
          <span>15-Jun-21</span>
        </div>
        <div className="h-[38px] w-[13px] rounded-[1px] border border-[#4c4c4c] bg-gradient-to-b from-[#3c3c3c] to-[#141414]" />
      </div>
    </div>
  );
}

export default function App() {
  return (
    <div className="flex h-[768px] w-[1366px] flex-col overflow-hidden bg-[#e8eaee] font-['Noto_Sans',sans-serif]">
      <div className="bg-gradient-to-b from-[#cdc7ce] to-[#f3f3f6]">
        <TitleBar />
        <Tabs />
      </div>
      <Ribbon />
      <FormulaBar />
      <Workbook />
      <StatusBar />
      <Taskbar />
    </div>
  );
}
